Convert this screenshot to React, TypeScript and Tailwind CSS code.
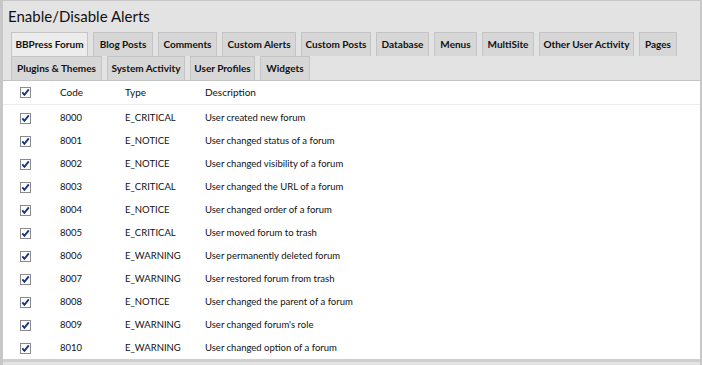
import React from "react";

const row1: [string, string][] = [
  ["BBPress Forum", "w-[77px]"],
  ["Blog Posts", "w-[60px]"],
  ["Comments", "w-[59px]"],
  ["Custom Alerts", "w-[74px]"],
  ["Custom Posts", "w-[70px]"],
  ["Database", "w-[53px]"],
  ["Menus", "w-[43px]"],
  ["MultiSite", "w-[52px]"],
  ["Other User Activity", "w-[95px]"],
  ["Pages", "w-[38px]"],
];
const row2: [string, string][] = [
  ["Plugins & Themes", "w-[91px]"],
  ["System Activity", "w-[78px]"],
  ["User Profiles", "w-[65px]"],
  ["Widgets", "w-[50px]"],
];

const rows: [string, string, string][] = [
  ["8000", "E_CRITICAL", "User created new forum"],
  ["8001", "E_NOTICE", "User changed status of a forum"],
  ["8002", "E_NOTICE", "User changed visibility of a forum"],
  ["8003", "E_CRITICAL", "User changed the URL of a forum"],
  ["8004", "E_NOTICE", "User changed order of a forum"],
  ["8005", "E_CRITICAL", "User moved forum to trash"],
  ["8006", "E_WARNING", "User permanently deleted forum"],
  ["8007", "E_WARNING", "User restored forum from trash"],
  ["8008", "E_NOTICE", "User changed the parent of a forum"],
  ["8009", "E_WARNING", "User changed forum's role"],
  ["8010", "E_WARNING", "User changed option of a forum"],
];

function Check() {
  return (
    <svg width="11" height="11" viewBox="0 0 11 11" className="block">
      <rect x="0.5" y="0.5" width="10" height="10" fill="#fff" stroke="#8a8a8a" />
      <path d="M2.3 5.4 L4.4 7.8 L8.8 2.4" fill="none" stroke="#16357f" strokeWidth="1.9" />
    </svg>
  );
}

function Tab({ label, w, active }: { label: string; w: string; active?: boolean }) {
  return (
    <div
      className={
        w +
        " shrink-0 whitespace-nowrap h-[24px] flex items-center justify-center border border-[#c4c4c4] border-b-0 text-[10px] font-bold text-[#111] " +
        (active ? "bg-[#ececec]" : "bg-[#d7d7d7]")
      }
    >
      {label}
    </div>
  );
}

export default function App() {
  return (
    <div
      className="w-[702px] h-[365px] bg-[#e3e3e3] border-r-2 border-l-[3px] border-t border-[#c7c7c7] overflow-hidden"
      style={{ fontFamily: 'Lato, "Open Sans", sans-serif' }}
    >
      <div className="pl-[5px] pt-[4px] h-[31px] text-[15px] text-[#111] leading-[22px]">
        Enable/Disable Alerts
      </div>
      <div className="pl-[8px] flex flex-col">
        <div className="flex gap-[5px]">
          {row1.map(([t, w], i) => (
            <Tab key={t} label={t} w={w} active={i === 0} />
          ))}
        </div>
        <div className="flex gap-[5px]">
          {row2.map(([t, w]) => (
            <Tab key={t} label={t} w={w} />
          ))}
        </div>
      </div>
      <div className="bg-white border-t border-[#c4c4c4] border-b-[3px] border-b-[#cfcfcf] h-[282px]">
        <div className="flex items-center h-[24px] border-b border-[#ececec] text-[10px] text-[#111]">
          <div className="w-[57px] pl-[17px]"><Check /></div>
          <div className="w-[65px]">Code</div>
          <div className="w-[80px]">Type</div>
          <div>Description</div>
        </div>
        <div className="pt-[2px]">
          {rows.map(([c, t, d]) => (
            <div key={c} className="flex items-center h-[23px] text-[9.5px] text-[#111]">
              <div className="w-[57px] pl-[17px]"><Check /></div>
              <div className="w-[65px]">{c}</div>
              <div className="w-[80px]">{t}</div>
              <div>{d}</div>
            </div>
          ))}
        </div>
      </div>
    </div>
  );
}
